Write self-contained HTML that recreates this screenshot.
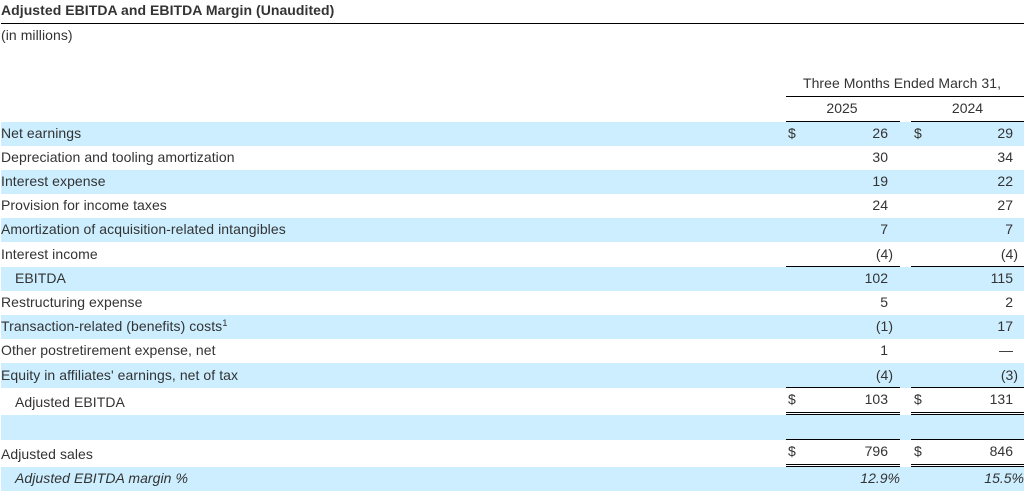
<!DOCTYPE html>
<html><head><meta charset="utf-8"><style>
html,body{margin:0;padding:0;background:#fff;width:1024px;height:493px;overflow:hidden}
body{position:relative;font:14px/24px "Liberation Sans",Arial,sans-serif;color:#333}
div{position:absolute;white-space:nowrap}
.b{left:1px;right:0;background:#cceeff}
.l{background:#000;height:1px}
.c1{left:786px;width:114px}.c2{left:911px;width:113px}
.n1,.n2,.p1,.p2{text-align:right;width:100px}
.n1{left:788px}.n2{left:913px}.p1{left:793px}.p2{left:918px}
.d1{left:788px}.d2{left:914px}
.t{left:1px;letter-spacing:.065px}.i{left:15px;letter-spacing:.065px}
sup{font-size:9.5px;line-height:0;vertical-align:5px}
</style></head><body>
<div style="left:1px;top:-2px;font-weight:bold;letter-spacing:.05px">Adjusted EBITDA and EBITDA Margin (Unaudited)</div>
<div class="l" style="left:1px;right:0;top:23px"></div>
<div class="t" style="top:23px">(in millions)</div>

<div style="left:803px;top:71px;letter-spacing:.04px">Three Months Ended March 31,</div>
<div class="l" style="left:786px;right:0;top:96px"></div>
<div style="left:785px;width:114px;top:96px;text-align:center">2025</div>
<div style="left:911px;width:113px;top:96px;text-align:center">2024</div>
<div class="l c1" style="top:121px"></div><div class="l c2" style="top:121px"></div>

<div class="b" style="top:122px;height:24px"></div>
<div class="b" style="top:170px;height:24px"></div>
<div class="b" style="top:218px;height:24px"></div>
<div class="b" style="top:267px;height:24px"></div>
<div class="b" style="top:315px;height:24px"></div>
<div class="b" style="top:363px;height:25px"></div>
<div class="b" style="top:415px;height:25px"></div>
<div class="b" style="top:467px;height:24px"></div>

<div class="l c1" style="top:266px"></div><div class="l c2" style="top:266px"></div>
<div class="l c1" style="top:387px"></div><div class="l c2" style="top:387px"></div>
<div class="l c1" style="top:412px"></div><div class="l c2" style="top:412px"></div>
<div class="l c1" style="top:414px"></div><div class="l c2" style="top:414px"></div>
<div class="l c1" style="top:439px"></div><div class="l c2" style="top:439px"></div>
<div class="l c1" style="top:464px"></div><div class="l c2" style="top:464px"></div>
<div class="l c1" style="top:466px"></div><div class="l c2" style="top:466px"></div>

<div class="t" style="top:121px">Net earnings</div><div class="d1" style="top:121px">$</div><div class="n1" style="top:121px">26</div><div class="d2" style="top:121px">$</div><div class="n2" style="top:121px">29</div>
<div class="t" style="top:145px">Depreciation and tooling amortization</div><div class="n1" style="top:145px">30</div><div class="n2" style="top:145px">34</div>
<div class="t" style="top:169px">Interest expense</div><div class="n1" style="top:169px">19</div><div class="n2" style="top:169px">22</div>
<div class="t" style="top:193px">Provision for income taxes</div><div class="n1" style="top:193px">24</div><div class="n2" style="top:193px">27</div>
<div class="t" style="top:217px">Amortization of acquisition-related intangibles</div><div class="n1" style="top:217px">7</div><div class="n2" style="top:217px">7</div>
<div class="t" style="top:242px">Interest income</div><div class="p1" style="top:242px">(4)</div><div class="p2" style="top:242px">(4)</div>
<div class="i" style="top:266px">EBITDA</div><div class="n1" style="top:266px">102</div><div class="n2" style="top:266px">115</div>
<div class="t" style="top:290px">Restructuring expense</div><div class="n1" style="top:290px">5</div><div class="n2" style="top:290px">2</div>
<div class="t" style="top:314px">Transaction-related (benefits) costs<sup>1</sup></div><div class="p1" style="top:314px">(1)</div><div class="n2" style="top:314px">17</div>
<div class="t" style="top:338px">Other postretirement expense, net</div><div class="n1" style="top:338px">1</div><div class="n2" style="top:338px">—</div>
<div class="t" style="top:363px">Equity in affiliates' earnings, net of tax</div><div class="p1" style="top:363px">(4)</div><div class="p2" style="top:363px">(3)</div>
<div class="i" style="top:390px">Adjusted EBITDA</div><div class="d1" style="top:387px">$</div><div class="n1" style="top:387px">103</div><div class="d2" style="top:387px">$</div><div class="n2" style="top:387px">131</div>
<div class="t" style="top:442px">Adjusted sales</div><div class="d1" style="top:439px">$</div><div class="n1" style="top:439px">796</div><div class="d2" style="top:439px">$</div><div class="n2" style="top:439px">846</div>
<div class="i" style="top:466px;font-style:italic">Adjusted EBITDA margin %</div><div style="left:800px;width:100px;text-align:right;top:466px;font-style:italic">12.9%</div><div style="left:924px;width:100px;text-align:right;top:466px;font-style:italic">15.5%</div>
</body></html>
